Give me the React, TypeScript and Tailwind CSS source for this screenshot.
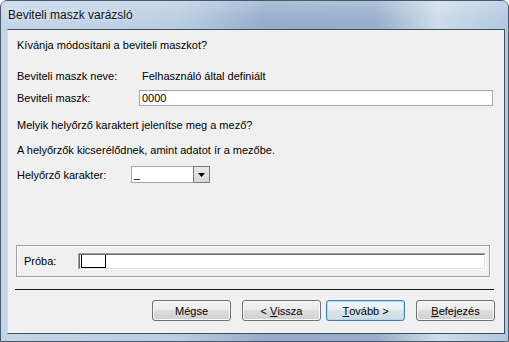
import React from "react";

function Btn({ children, def }: { children: React.ReactNode; def?: boolean }) {
  const cls = def
    ? "w-[79px] h-[21px] rounded-[3px] border border-[#3c7fb1] bg-[linear-gradient(180deg,#f1f6f9_0%,#e9eff3_50%,#dbe4ea_50%,#d0dae2_100%)] shadow-[inset_0_0_0_1px_#a9dcf6] flex items-center justify-center text-[11px] text-black"
    : "w-[79px] h-[21px] rounded-[3px] border border-[#707070] bg-[linear-gradient(180deg,#f2f2f2_0%,#ebebeb_50%,#dddddd_50%,#cfcfcf_100%)] shadow-[inset_0_0_0_1px_#fbfbfb] flex items-center justify-center text-[11px] text-black";
  return <div className={cls}>{children}</div>;
}

export default function App() {
  return (
    <div className="w-[509px] h-[342px] overflow-hidden bg-white font-['Liberation_Sans',Arial,sans-serif]">
      <div className="w-[509px] h-[342px] flex flex-col rounded-t-[7px] border border-[#4a5a6c] bg-[linear-gradient(90deg,#c3d5e9_0%,#b9cde3_35%,#93adca_52%,#95aecb_74%,#cedbe8_86%,#b0c7e0_100%)]">
        {/* Title bar */}
        <div className="h-[28px] shrink-0 flex items-center pl-[7px] bg-[linear-gradient(180deg,rgba(255,255,255,0.25)_0%,rgba(255,255,255,0.05)_60%,rgba(255,255,255,0)_100%)]">
          <span className="text-[12px] leading-[14px] text-[#111] mt-[-1px] [text-shadow:0_0_6px_rgba(255,255,255,0.9)]">
            Beviteli maszk varázsló
          </span>
        </div>
        {/* Client */}
        <div className="ml-[6px] mr-[3px] mb-[7px] flex-1 border border-[#414e5c] border-l-[#d2dde8] bg-[#f0f0f0] flex flex-col pl-[9px] pr-[9px] pt-[8px] text-[11px] leading-[14px] text-black">
          <div className="h-[14px]">Kívánja módosítani a beviteli maszkot?</div>

          <div className="h-[14px] mt-[17px] flex">
            <div className="w-[125px]">Beviteli maszk neve:</div>
            <div>Felhasználó által definiált</div>
          </div>

          <div className="h-[16px] mt-[7px] flex items-center">
            <div className="w-[122px]">Beviteli maszk:</div>
            <div className="w-[354px] h-[16px] bg-white border border-[#a5a5a5] pl-[2px] flex items-center">0000</div>
          </div>

          <div className="h-[14px] mt-[12px]">Melyik helyőrző karaktert jelenítse meg a mező?</div>
          <div className="h-[14px] mt-[11px]">A helyőrzők kicserélődnek, amint adatot ír a mezőbe.</div>

          <div className="h-[17px] mt-[9px] flex items-center">
            <div className="w-[114px]">Helyőrző karakter:</div>
            <div className="w-[79px] h-[17px] flex">
              <div className="flex-1 h-[17px] bg-white border-y border-l border-[#a5a5a5] pl-[2px] leading-[14px]">_</div>
              <div className="w-[17px] h-[17px] border border-[#7a7a7a] bg-[linear-gradient(180deg,#e8e8e8_0%,#d6d6d6_100%)] flex items-center justify-center">
                <svg width="7" height="4" viewBox="0 0 7 4">
                  <polygon points="0,0 7,0 3.5,4" fill="#000" />
                </svg>
              </div>
            </div>
          </div>

          {/* Próba frame */}
          <div className="mt-[62px] ml-[-1px] w-[474px] h-[32px] border border-[#a0a0a0] shadow-[inset_1px_1px_0_#fff,1px_1px_0_#fff] flex items-center pl-[7px]">
            <div className="w-[54px]">Próba:</div>
            <div className="w-[408px] h-[17px] border border-t-[#a0a0a0] border-l-[#a0a0a0] border-b-white border-r-white">
              <div className="w-full h-full border border-t-[#696969] border-l-[#696969] border-b-[#e3e3e3] border-r-[#e3e3e3] bg-white flex items-start pl-[1px]">
                <div className="w-[25px] h-[13px] border-l border-r border-b border-black"></div>
              </div>
            </div>
          </div>

          <div className="mt-[12px] ml-[-2px] w-[479px] h-px bg-[#1a1a1a]"></div>

          <div className="mt-[10px] flex justify-end">
            <Btn>Mégse</Btn>
            <div className="w-[11px]" />
            <Btn>
              &lt;&nbsp;<span className="underline">V</span>issza
            </Btn>
            <div className="w-[5px]" />
            <Btn def>
              <span className="underline">T</span>ovább &gt;
            </Btn>
            <div className="w-[11px]" />
            <Btn>
              <span className="underline">B</span>efejezés
            </Btn>
          </div>
        </div>
      </div>
    </div>
  );
}
